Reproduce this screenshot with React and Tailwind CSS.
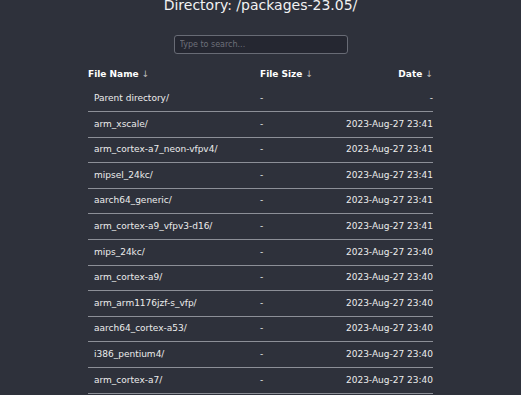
const entries = [
  ["arm_xscale/", "2023-Aug-27 23:41"],
  ["arm_cortex-a7_neon-vfpv4/", "2023-Aug-27 23:41"],
  ["mipsel_24kc/", "2023-Aug-27 23:41"],
  ["aarch64_generic/", "2023-Aug-27 23:41"],
  ["arm_cortex-a9_vfpv3-d16/", "2023-Aug-27 23:41"],
  ["mips_24kc/", "2023-Aug-27 23:40"],
  ["arm_cortex-a9/", "2023-Aug-27 23:40"],
  ["arm_arm1176jzf-s_vfp/", "2023-Aug-27 23:40"],
  ["aarch64_cortex-a53/", "2023-Aug-27 23:40"],
  ["i386_pentium4/", "2023-Aug-27 23:40"],
  ["arm_cortex-a7/", "2023-Aug-27 23:40"],
];

export default function App() {
  return (
    <div className="min-h-screen bg-[#2e313b] font-['DejaVu_Sans',sans-serif] text-[#ececec]">
      <h1 className="-mt-[5px] text-center text-[14px] font-normal leading-[20px] text-[#f2f2f2]">
        Directory: /packages-23.05/
      </h1>

      <div className="mt-[20px] flex justify-center">
        <input
          className="h-[19px] w-[174px] rounded-[3px] border border-[#686b75] bg-[#252731] px-[5px] text-[8px] text-[#ddd] outline-none placeholder:text-[#6d707a]"
          placeholder="Type to search..."
          type="text"
        />
      </div>

      <table className="mx-auto mt-[10px] w-[345px] border-collapse text-[9px]">
        <thead>
          <tr className="h-[22px] text-left font-bold text-white">
            <th className="w-[172px] p-0 align-middle">
              File Name <span className="font-normal text-[#bbb]">↓</span>
            </th>
            <th className="w-[85px] p-0 align-middle">
              File Size <span className="font-normal text-[#bbb]">↓</span>
            </th>
            <th className="p-0 text-right align-middle">
              Date <span className="font-normal text-[#bbb]">↓</span>
            </th>
          </tr>
        </thead>
        <tbody>
          <tr className="h-[25.6px] border-b border-[#8c8f97]">
            <td className="pl-[6px] align-middle">Parent directory/</td>
            <td className="align-middle">-</td>
            <td className="text-right align-middle">-</td>
          </tr>
          {entries.map(([name, date]) => (
            <tr key={name} className="h-[25.6px] border-b border-[#8c8f97]">
              <td className="pl-[6px] align-middle">{name}</td>
              <td className="align-middle">-</td>
              <td className="text-right align-middle">{date}</td>
            </tr>
          ))}
        </tbody>
      </table>
    </div>
  );
}
